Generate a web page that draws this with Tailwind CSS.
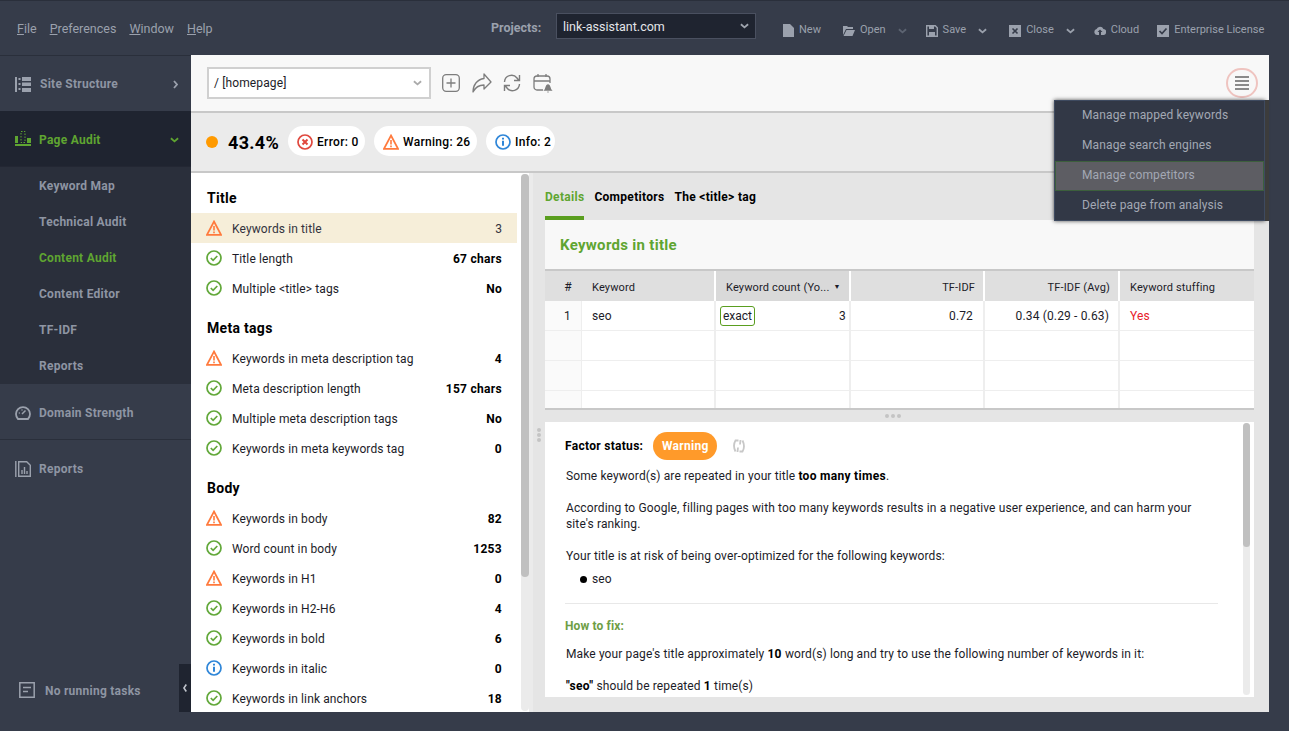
<!DOCTYPE html>
<html lang="en">
<head>
    <meta charset="UTF-8">
    <meta name="viewport" content="width=device-width, initial-scale=1.0">
    <title>Website Auditor</title>
    <script src="https://cdn.jsdelivr.net/npm/@tailwindcss/browser@4"></script>
</head>
<body class="bg-[#363c4a]">
    <!-- shared icons -->
    <svg class="hidden">
        <symbol id="warn" viewBox="0 0 16 16"><path d="M8 1.500 15 14.800H1z" fill="none" stroke="#ff7a3d" stroke-width="1.700"/><path d="M8 6v4.400M8 11.600v1.600" stroke="#ff7a3d" stroke-width="1.600"/></symbol>
        <symbol id="ok" viewBox="0 0 16 16"><circle cx="8" cy="8" r="7" fill="none" stroke="#62a83a" stroke-width="1.700"/><path d="M4.800 8l2.300 2.300 4.200-4.300" fill="none" stroke="#62a83a" stroke-width="1.700"/></symbol>
        <symbol id="info" viewBox="0 0 16 16"><circle cx="8" cy="8" r="7" fill="none" stroke="#2f86d8" stroke-width="1.700"/><path d="M8 6.800v5M8 3.800v1.800" stroke="#2f86d8" stroke-width="2"/></symbol>
        <symbol id="chev" viewBox="0 0 10 6"><path d="M1 1l4 3.500L9 1" fill="none" stroke="currentColor" stroke-width="2"/></symbol>
    </svg>

    <div class="relative w-[1289px] h-[731px] overflow-hidden flex flex-col font-[Roboto,sans-serif] text-[12px] tracking-[0.12px] [&_b]:tracking-[0.3px] text-[#1c1c28]">

        <!-- Top bar -->
        <header class="h-[55px] shrink-0 flex items-center text-[#9ba1ad] border-t border-[#2a2f3b] tracking-normal">
            <nav class="flex gap-[13px] pl-[17px] w-[491px] mt-[2px] text-[12.5px]">
                <span><u>F</u>ile</span><span><u>P</u>references</span><span><u>W</u>indow</span><span><u>H</u>elp</span>
            </nav>
            <span class="font-bold w-[65px] text-[12.5px]">Projects:</span>
            <div class="w-[200px] h-[26px] self-start mt-[12px] pt-[2px] bg-[#1f2430] border border-[#4a5060] flex items-center justify-between pl-[6px] pr-[6px] text-[#e4e6ea] text-[12.5px]">
                link-assistant.com
                <svg class="w-[9px] h-[6px] -mt-[2px] text-[#a0a6b0]"><use href="#chev"/></svg>
            </div>
            <div class="flex items-center ml-[27px] mt-[5px] gap-[5px] text-[11px]">
                <svg class="w-[11px] h-[13px]" viewBox="0 0 11 13"><path d="M0 0h7l4 4v9H0z" fill="#9ba1ad"/></svg><span class="mr-[17px]">New</span>
                <svg class="w-[12px] h-[11px]" viewBox="0 0 12 11"><path d="M0 1h4l1 1h5v2H3L0 10zM3.500 5H12l-2.500 6H0.500z" fill="#9ba1ad"/></svg><span>Open</span>
                <svg class="w-[9px] h-[6px] ml-[7px] mr-[14px] text-[#5d6472]"><use href="#chev"/></svg>
                <svg class="w-[12px] h-[12px]" viewBox="0 0 12 12"><path d="M.7.7h8.600l2 2v8.600H.7z" fill="none" stroke="#9ba1ad" stroke-width="1.400"/><path d="M3 1h5v3H3zM3 7h6v4H3z" fill="#9ba1ad"/></svg><span>Save</span>
                <svg class="w-[9px] h-[6px] ml-[7px] mr-[17px] text-[#9ba1ad]"><use href="#chev"/></svg>
                <svg class="w-[12px] h-[12px]" viewBox="0 0 12 12"><path d="M0 0h12v12H0z" fill="#9ba1ad"/><path d="M3.500 3.500l5 5M8.500 3.500l-5 5" stroke="#363c4a" stroke-width="1.600"/></svg><span>Close</span>
                <svg class="w-[9px] h-[6px] ml-[7px] mr-[14px] text-[#9ba1ad]"><use href="#chev"/></svg>
                <svg class="w-[12px] h-[9px]" viewBox="0 0 12 9"><path d="M3 9a3 3 0 0 1-.4-5.900A3.600 3.600 0 0 1 9.400 3 3 3 0 0 1 9 9H7V6h1.500L6 3.500 3.500 6H5v3z" fill="#9ba1ad"/></svg><span class="mr-[13px]">Cloud</span>
                <svg class="w-[12px] h-[12px]" viewBox="0 0 12 12"><path d="M0 0h12v12H0z" fill="#9ba1ad"/><path d="M2.500 6l2.500 2.500 4.500-5" fill="none" stroke="#363c4a" stroke-width="1.700"/></svg><span>Enterprise License</span>
            </div>
        </header>

        <div class="flex flex-1 min-h-0">
            <!-- Sidebar -->
            <aside class="w-[191px] shrink-0 relative text-[#8e95a3] font-bold tracking-[0.25px]">
                <div class="h-[56px] flex items-center pl-[15px] pr-[13px] pt-[1px] border-t border-[#2a2f3b]">
                    <svg class="w-[17px] h-[15px] mr-[8px]" viewBox="0 0 17 15" fill="#9ba1ad"><path d="M0 0h2v15H0zM3.500 1h2v2h-2zM7 0h9v4H7zM3.500 6h2v2h-2zM7 5.500h9v3.500H7zM3.500 11h2v2h-2zM7 11h9v4H7z"/></svg>
                    <span class="flex-1">Site Structure</span>
                    <svg class="w-[5px] h-[9px]" viewBox="0 0 5 9"><path d="M1 1l3 3.500L1 8" fill="none" stroke="#9ba1ad" stroke-width="1.800"/></svg>
                </div>
                <div class="h-[55px] flex items-center pl-[15px] pr-[12px] pt-[2px] bg-[#1f2430] text-[#5fa531]">
                    <svg class="w-[17px] h-[15px] mr-[7px] -mt-[2px]" viewBox="0 0 17 15" fill="#5fa531"><path d="M0 13h16v2H0zM0 5h3v7H0zM12 7h4v5h-4z"/><path d="M6 .5h4v11H6z" fill="none" stroke="#5fa531" stroke-dasharray="1.500 1.500"/></svg>
                    <span class="flex-1">Page Audit</span>
                    <svg class="w-[9px] h-[6px]"><use href="#chev"/></svg>
                </div>
                <div class="bg-[#2a2f3b] border-t border-[#232733] [&>div]:pt-[2px]">
                    <div class="h-[36px] flex items-center pl-[39px]">Keyword Map</div>
                    <div class="h-[36px] flex items-center pl-[39px]">Technical Audit</div>
                    <div class="h-[36px] flex items-center pl-[39px] text-[#5fa531]">Content Audit</div>
                    <div class="h-[36px] flex items-center pl-[39px]">Content Editor</div>
                    <div class="h-[36px] flex items-center pl-[39px]">TF-IDF</div>
                    <div class="h-[36px] flex items-center pl-[39px]">Reports</div>
                </div>
                <div class="h-[57px] flex items-center pl-[15px] pt-[2px] border-t border-b border-[#2a2f3b]">
                    <svg class="w-[16px] h-[16px] mr-[8px]" viewBox="0 0 16 16"><path d="M3 14A7 7 0 1 1 13 14z" fill="none" stroke="#9ba1ad" stroke-width="1.800"/><path d="M7 9l3.500-3.500M3.800 8h1M6.500 5h1" stroke="#9ba1ad" stroke-width="1.500"/></svg>
                    Domain Strength
                </div>
                <div class="h-[55px] flex items-center pl-[15px] pt-[2px]">
                    <svg class="w-[16px] h-[16px] mr-[8px]" viewBox="0 0 16 16" fill="none" stroke="#9ba1ad" stroke-width="1.400"><path d="M.8 0v16M3.700.7h8l3.600 3.600v11H3.700z"/><path d="M7 13V9M9.500 13V6M12 13v-3"/></svg>
                    Reports
                </div>
                <div class="absolute left-[19px] top-[627px] flex items-center">
                    <svg class="w-[16px] h-[16px] mr-[10px] -mt-[2px]" viewBox="0 0 16 16" fill="none" stroke="#9ba1ad" stroke-width="1.500"><path d="M.8.8h14.400v14.400H.8zM4 5.500h8M4 9.500h5"/></svg>
                    No running tasks
                </div>
                <div class="absolute right-0 top-[609px] w-[12px] h-[48px] pr-[1px] bg-[#1f2430] flex items-center justify-center">
                    <svg class="w-[4px] h-[8px] -mt-[1px]" viewBox="0 0 4 8"><path d="M3.300 .5.900 4l2.400 3.500" fill="none" stroke="#c0c4cc" stroke-width="1.600"/></svg>
                </div>
            </aside>

            <!-- Main -->
            <main class="w-[1078px] h-[657px] flex flex-col bg-[#e5e5e5]">
                <!-- Toolbar -->
                <div class="h-[58px] shrink-0 bg-[#f8f8f8] border-b-2 border-[#c8c8c8] flex items-center pl-[16px] pr-[11px] pb-[1px]">
                    <div class="w-[224px] h-[32px] bg-white border-2 border-[#d0d0d0] flex items-center justify-between pl-[5px] pr-[7px]">
                        / [homepage]
                        <svg class="w-[9px] h-[6px] text-[#aaaaaa]"><use href="#chev"/></svg>
                    </div>
                    <svg class="w-[18px] h-[18px] ml-[11px]" viewBox="0 0 18 18" fill="none" stroke="#7d7d7d" stroke-width="1.300"><rect x=".7" y=".7" width="16.600" height="16.600" rx="3.500"/><path d="M9 4.500v9M4.500 9h9"/></svg>
                    <svg class="w-[20px] h-[20px] ml-[12px]" viewBox="0 0 20 20" fill="none" stroke="#7d7d7d" stroke-width="1.300"><path d="M12 1l7 8-7 7v-4C7 12 3.500 14 1 19 1 12 5 6.500 12 5.500z" stroke-linejoin="round"/></svg>
                    <svg class="w-[18px] h-[18px] ml-[11px]" viewBox="0 0 18 18" fill="none" stroke="#7d7d7d" stroke-width="1.400"><path d="M1.500 8A7 7 0 0 1 14 4l2 2.500M16.500 1v5.500H11M16.500 10A7 7 0 0 1 4 14l-2-2.500M1.500 17v-5.500H7"/></svg>
                    <svg class="w-[20px] h-[20px] ml-[12px]" viewBox="0 0 20 20" fill="none" stroke="#7d7d7d" stroke-width="1.300"><path d="M10 17H4a3 3 0 0 1-3-3V6a3 3 0 0 1 3-3h10a3 3 0 0 1 3 3v4M1 8h16M5 1v3M13 1v3"/><path d="M12 17c1-1 1-5 3-5s2 4 3 5zM15 18.500v1" fill="#7d7d7d"/></svg>
                    <div class="ml-auto w-[32px] h-[30px] rounded-full border-2 border-[#efc4c0] flex flex-col items-center justify-center gap-[2px]">
                        <div class="w-[14px] h-[2px] bg-[#8a8a8a]"></div><div class="w-[14px] h-[2px] bg-[#8a8a8a]"></div><div class="w-[14px] h-[2px] bg-[#8a8a8a]"></div><div class="w-[14px] h-[2px] bg-[#8a8a8a]"></div>
                    </div>
                </div>

                <!-- Score bar -->
                <div class="h-[60px] shrink-0 bg-[#ebebeb] border-b-2 border-[#c8c8c8] flex items-center pl-[15px] font-medium text-black tracking-[0.3px]">
                    <div class="w-[12px] h-[12px] rounded-full bg-[#ff9a00]"></div>
                    <span class="ml-[10px] mr-[9px] text-[18px] font-bold">43.4%</span>
                    <div class="h-[30px] w-[77px] -mt-[2px] pt-[2px] pl-[9px] rounded-full bg-white flex items-center gap-[4px]"><svg class="w-[16px] h-[16px]" viewBox="0 0 16 16"><circle cx="8" cy="8" r="7" fill="none" stroke="#e0483e" stroke-width="1.700"/><path d="M5.500 5.500l5 5M10.500 5.500l-5 5" stroke="#e0483e" stroke-width="2"/></svg>Error: 0</div>
                    <div class="h-[30px] w-[103px] -mt-[2px] pt-[2px] pl-[9px] ml-[9px] rounded-full bg-white flex items-center gap-[4px]"><svg class="w-[16px] h-[16px]"><use href="#warn"/></svg>Warning: 26</div>
                    <div class="h-[30px] w-[69px] -mt-[2px] pt-[2px] pl-[9px] ml-[9px] rounded-full bg-white flex items-center gap-[4px]"><svg class="w-[16px] h-[16px]"><use href="#info"/></svg>Info: 2</div>
                </div>

                <div class="flex flex-1 min-h-0">
                    <!-- Factor list -->
                    <section class="relative w-[342px] shrink-0 bg-white overflow-hidden [&>div>span]:pt-[2px] [&>div>b]:pt-[2px]">
                        <h3 class="h-[40px] pl-[16px] pt-[17px] font-bold text-[14px] leading-[16px] tracking-[0.3px] text-black">Title</h3>
                        <div class="h-[30px] w-[326px] flex items-center pl-[15px] pr-[15px] bg-[#f6eed9]"><svg class="w-[16px] h-[16px] mr-[10px]"><use href="#warn"/></svg><span class="flex-1 text-[#33333d]">Keywords in title</span><span class="text-[#33333d]">3</span></div>
                        <div class="h-[30px] w-[326px] flex items-center pl-[15px] pr-[15px]"><svg class="w-[16px] h-[16px] mr-[10px]"><use href="#ok"/></svg><span class="flex-1">Title length</span><b class="text-black">67 chars</b></div>
                        <div class="h-[30px] w-[326px] flex items-center pl-[15px] pr-[15px]"><svg class="w-[16px] h-[16px] mr-[10px]"><use href="#ok"/></svg><span class="flex-1">Multiple &lt;title&gt; tags</span><b class="text-black">No</b></div>

                        <h3 class="h-[40px] pl-[16px] pt-[17px] font-bold text-[14px] leading-[16px] tracking-[0.3px] text-black">Meta tags</h3>
                        <div class="h-[30px] w-[326px] flex items-center pl-[15px] pr-[15px]"><svg class="w-[16px] h-[16px] mr-[10px]"><use href="#warn"/></svg><span class="flex-1">Keywords in meta description tag</span><b class="text-black">4</b></div>
                        <div class="h-[30px] w-[326px] flex items-center pl-[15px] pr-[15px]"><svg class="w-[16px] h-[16px] mr-[10px]"><use href="#ok"/></svg><span class="flex-1">Meta description length</span><b class="text-black">157 chars</b></div>
                        <div class="h-[30px] w-[326px] flex items-center pl-[15px] pr-[15px]"><svg class="w-[16px] h-[16px] mr-[10px]"><use href="#ok"/></svg><span class="flex-1">Multiple meta description tags</span><b class="text-black">No</b></div>
                        <div class="h-[30px] w-[326px] flex items-center pl-[15px] pr-[15px]"><svg class="w-[16px] h-[16px] mr-[10px]"><use href="#ok"/></svg><span class="flex-1">Keywords in meta keywords tag</span><b class="text-black">0</b></div>

                        <h3 class="h-[40px] pl-[16px] pt-[17px] font-bold text-[14px] leading-[16px] tracking-[0.3px] text-black">Body</h3>
                        <div class="h-[30px] w-[326px] flex items-center pl-[15px] pr-[15px]"><svg class="w-[16px] h-[16px] mr-[10px]"><use href="#warn"/></svg><span class="flex-1">Keywords in body</span><b class="text-black">82</b></div>
                        <div class="h-[30px] w-[326px] flex items-center pl-[15px] pr-[15px]"><svg class="w-[16px] h-[16px] mr-[10px]"><use href="#ok"/></svg><span class="flex-1">Word count in body</span><b class="text-black">1253</b></div>
                        <div class="h-[30px] w-[326px] flex items-center pl-[15px] pr-[15px]"><svg class="w-[16px] h-[16px] mr-[10px]"><use href="#warn"/></svg><span class="flex-1">Keywords in H1</span><b class="text-black">0</b></div>
                        <div class="h-[30px] w-[326px] flex items-center pl-[15px] pr-[15px]"><svg class="w-[16px] h-[16px] mr-[10px]"><use href="#ok"/></svg><span class="flex-1">Keywords in H2-H6</span><b class="text-black">4</b></div>
                        <div class="h-[30px] w-[326px] flex items-center pl-[15px] pr-[15px]"><svg class="w-[16px] h-[16px] mr-[10px]"><use href="#ok"/></svg><span class="flex-1">Keywords in bold</span><b class="text-black">6</b></div>
                        <div class="h-[30px] w-[326px] flex items-center pl-[15px] pr-[15px]"><svg class="w-[16px] h-[16px] mr-[10px]"><use href="#info"/></svg><span class="flex-1">Keywords in italic</span><b class="text-black">0</b></div>
                        <div class="h-[30px] w-[326px] flex items-center pl-[15px] pr-[15px]"><svg class="w-[16px] h-[16px] mr-[10px]"><use href="#ok"/></svg><span class="flex-1">Keywords in link anchors</span><b class="text-black">18</b></div>

                        <!-- scrollbar -->
                        <div class="absolute right-0 top-0 bottom-0 w-[16px] bg-white pl-[4px] pt-[1px] pb-[1px] border-r-4 border-[#ebebeb]">
                            <div class="w-[8px] h-full rounded-full bg-[#ebebeb]"><div class="w-[8px] h-[403px] rounded-full bg-[#c0c0c0]"></div></div>
                        </div>
                    </section>

                    <!-- Details -->
                    <section class="relative flex-1 min-w-0 pl-[12px] pr-[15px] flex flex-col">
                        <div class="h-[47px] shrink-0 flex gap-[10px] font-bold tracking-[0.3px] text-black">
                            <div class="h-[47px] pt-[16px] leading-[16px] border-b-4 border-[#5a9e1f] text-[#5fa531]">Details</div>
                            <div class="pt-[16px] leading-[16px]">Competitors</div>
                            <div class="pt-[16px] leading-[16px]">The &lt;title&gt; tag</div>
                        </div>
                        <div class="h-[51px] shrink-0 bg-[#f8f8f8] border-b-[2px] border-[#c8c8c8] pt-[2px] flex items-center pl-[15px] font-bold text-[15px] tracking-[0.3px] text-[#5fa531]">Keywords in title</div>

                        <div class="grid grid-cols-[37px_134px_135px_134px_135px_134px] content-start shrink-0 bg-white text-[11px] tracking-[0.15px] leading-[33px] border-b-[2px] border-[#c8c8c8] h-[139px] overflow-hidden">
                            <div class="h-[30px] bg-[#dfdfdf] pl-[9px] text-center text-[12px]">#</div>
                            <div class="h-[30px] bg-[#dfdfdf] pl-[10px] border-r-2 border-white">Keyword</div>
                            <div class="h-[30px] bg-[#d9d9d9] pl-[10px] pt-[2px] border-r-2 border-white flex items-center gap-[4px]">Keyword count (Yo...<span class="text-[7px] leading-none">▼</span></div>
                            <div class="h-[30px] bg-[#dfdfdf] pr-[8px] border-r-2 border-white text-right">TF-IDF</div>
                            <div class="h-[30px] bg-[#dfdfdf] pr-[8px] border-r-2 border-white text-right">TF-IDF (Avg)</div>
                            <div class="h-[30px] bg-[#dfdfdf] pl-[10px]">Keyword stuffing</div>

                            <div class="h-[30px] bg-[#fafafa] pl-[9px] text-center text-[12px] leading-[30px] border-r border-b border-[#eeeeee]">1</div>
                            <div class="h-[30px] pl-[10px] text-[12px] leading-[30px] border-r-2 border-b border-[#eeeeee]">seo</div>
                            <div class="h-[30px] pl-[4px] pr-[3px] text-[12px] leading-[30px] border-r-2 border-b border-[#eeeeee] flex items-center justify-between"><span class="w-[35px] h-[20px] leading-[18px] text-center rounded-[3px] border border-[#5a9e1f] tracking-normal">exact</span>3</div>
                            <div class="h-[30px] pr-[10px] text-[12px] leading-[30px] text-right border-r-2 border-b border-[#eeeeee]">0.72</div>
                            <div class="h-[30px] pr-[9px] text-[12px] leading-[30px] text-right border-r-2 border-b border-[#eeeeee]">0.34 (0.29 - 0.63)</div>
                            <div class="h-[30px] pl-[10px] text-[12px] leading-[30px] text-[#e8202a] border-b border-[#eeeeee]">Yes</div>

                            <div class="h-[30px] bg-[#fafafa] border-r border-b border-[#eeeeee]"></div><div class="h-[30px] border-r-2 border-b border-[#eeeeee]"></div><div class="h-[30px] border-r-2 border-b border-[#eeeeee]"></div><div class="h-[30px] border-r-2 border-b border-[#eeeeee]"></div><div class="h-[30px] border-r-2 border-b border-[#eeeeee]"></div><div class="h-[30px] border-b border-[#eeeeee]"></div>
                            <div class="h-[30px] bg-[#fafafa] border-r border-b border-[#eeeeee]"></div><div class="h-[30px] border-r-2 border-b border-[#eeeeee]"></div><div class="h-[30px] border-r-2 border-b border-[#eeeeee]"></div><div class="h-[30px] border-r-2 border-b border-[#eeeeee]"></div><div class="h-[30px] border-r-2 border-b border-[#eeeeee]"></div><div class="h-[30px] border-b border-[#eeeeee]"></div>
                            <div class="h-[30px] bg-[#fafafa] border-r border-[#eeeeee]"></div><div class="h-[30px] border-r-2 border-[#eeeeee]"></div><div class="h-[30px] border-r-2 border-[#eeeeee]"></div><div class="h-[30px] border-r-2 border-[#eeeeee]"></div><div class="h-[30px] border-r-2 border-[#eeeeee]"></div><div class="h-[30px]"></div>
                        </div>

                        <!-- splitter -->
                        <div class="h-[12px] shrink-0 pr-[14px] flex items-center justify-center gap-[2px]">
                            <div class="w-[4px] h-[4px] rounded-full bg-[#c4c4c4]"></div><div class="w-[4px] h-[4px] rounded-full bg-[#c4c4c4]"></div><div class="w-[4px] h-[4px] rounded-full bg-[#c4c4c4]"></div>
                        </div>
                        <div class="absolute left-[4px] top-[255px] flex flex-col gap-[1px]">
                            <div class="w-[4px] h-[4px] rounded-full bg-[#c4c4c4]"></div><div class="w-[4px] h-[4px] rounded-full bg-[#c4c4c4]"></div><div class="w-[4px] h-[4px] rounded-full bg-[#c4c4c4]"></div>
                        </div>

                        <!-- Factor text -->
                        <div class="relative h-[275px] shrink-0 bg-white pl-[21px] pr-[39px] overflow-hidden leading-[16px]">
                            <div class="flex items-center h-[28px] mt-[10px] -ml-[1px] font-bold tracking-[0.3px] text-black">
                                Factor status:
                                <span class="ml-[10px] w-[64px] h-[28px] leading-[28px] text-center rounded-full bg-[#ff9a2a] text-white">Warning</span>
                                <svg class="w-[14px] h-[14px] ml-[15px]" viewBox="0 0 14 14" fill="none" stroke="#c8c8c8" stroke-width="1.800"><path d="M6.500 1.500H3.500Q.5 6.500 3.500 12.500M6 8.500 5.500 13M7.500 12.500H10.500Q13.500 7.500 10.500 1.500M8 5.500 8.500 1"/></svg>
                            </div>
                            <p class="mt-[8px]">Some keyword(s) are repeated in your title <b class="text-black">too many times</b>.</p>
                            <p class="mt-[16px]">According to Google, filling pages with too many keywords results in a negative user experience, and can harm your site's ranking.</p>
                            <p class="mt-[16px]">Your title is at risk of being over-optimized for the following keywords:</p>
                            <div class="flex items-center mt-[7px] ml-[14px]"><div class="w-[7px] h-[7px] rounded-full bg-black mr-[5px]"></div>seo</div>
                            <hr class="mt-[16px] -ml-[1px] w-[653px] border-[#e8e8e8]">
                            <p class="mt-[14px] -ml-[1px] font-bold text-[#6e9e45]">How to fix:</p>
                            <p class="mt-[12px]">Make your page's title approximately <b class="text-black">10</b> word(s) long and try to use the following number of keywords in it:</p>
                            <p class="mt-[16px]"><b class="text-black">"seo"</b> should be repeated <b class="text-black">1</b> time(s)</p>
                            <div class="absolute right-[4px] top-[1px] bottom-[2px] w-[7px] rounded-full bg-[#ebebeb]"><div class="h-[124px] rounded-full bg-[#c0c0c0]"></div></div>
                        </div>
                    </section>
                </div>
            </main>
        </div>

        <!-- Dropdown menu -->
        <div class="absolute left-[1054px] top-[100px] w-[211px] h-[121px] bg-[#323846] border border-[#3e4a60] shadow-[4px_0_0_#3c3c3c,0_0_4px_rgba(0,0,0,0.7)] text-[#a3a8b4] [&>div]:pb-[2px]">
            <div class="h-[30px] flex items-center pl-[27px]">Manage mapped keywords</div>
            <div class="h-[30px] flex items-center pl-[27px]">Manage search engines</div>
            <div class="h-[30px] flex items-center pl-[26px] bg-[#5d5d63] border border-[#3c5f3c]">Manage competitors</div>
            <div class="h-[30px] flex items-center pl-[27px]">Delete page from analysis</div>
        </div>
    </div>
</body>
</html>
